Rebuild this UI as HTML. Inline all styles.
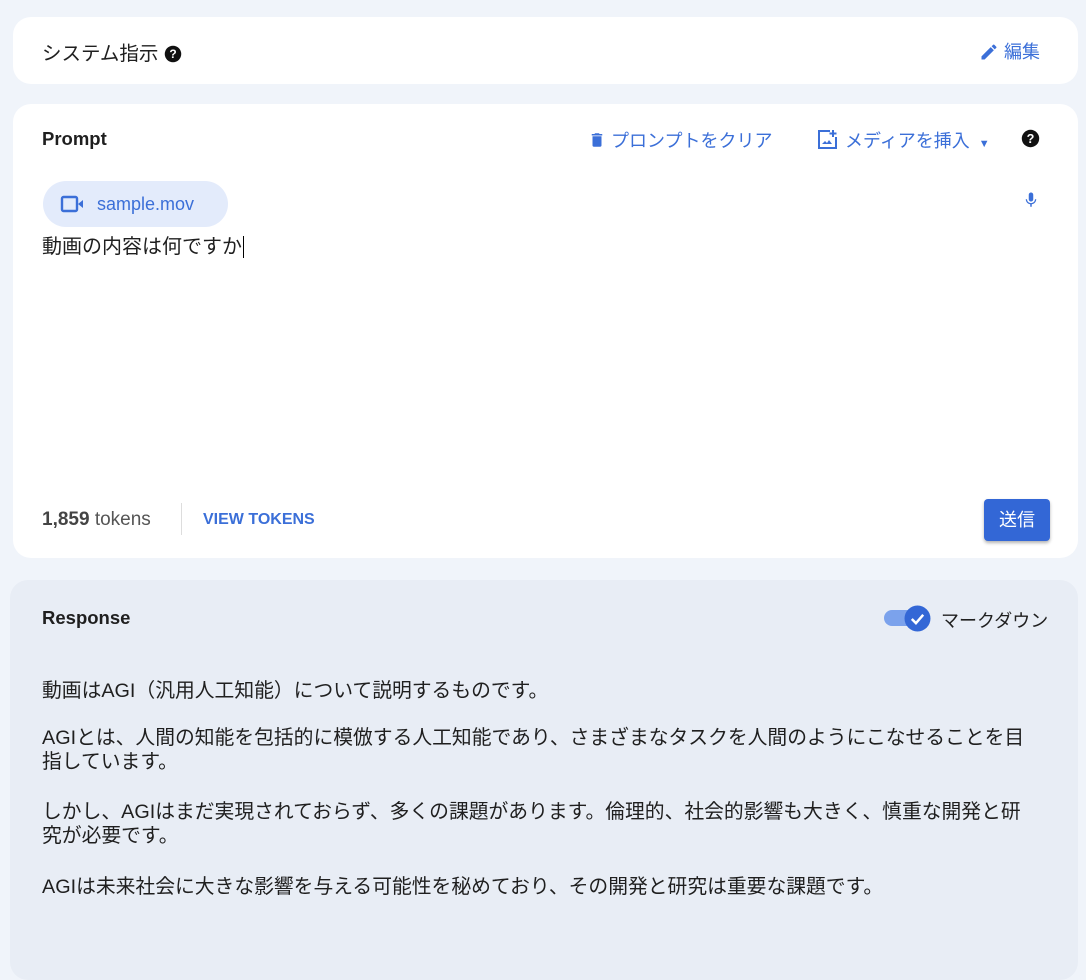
<!DOCTYPE html>
<html><head><meta charset="utf-8"><style>
*{box-sizing:border-box;margin:0;padding:0}
body{width:1086px;height:970px;background:#f0f4fa;font-family:"Liberation Sans","Noto Sans CJK JP",sans-serif;color:#1f1f1f;position:relative;overflow:hidden}
.card{position:absolute;background:#fff;border-radius:18px}
.abs{position:absolute;white-space:nowrap}
.blue{color:#3b6fd8}
</style></head><body>
<div class="card" style="left:13px;top:17px;width:1065px;height:67px"></div>
<div class="abs" style="left:42px;top:37px;font-size:19.5px">システム指示 <svg width="18" height="18" viewBox="0 0 24 24" style="vertical-align:-3px"><circle cx="12" cy="12" r="11" fill="#111"/><text x="12" y="17.5" font-size="16" font-weight="bold" fill="#fff" text-anchor="middle" font-family="Liberation Sans">?</text></svg></div>
<div class="abs blue" style="left:979px;top:38px;font-size:18px"><svg width="20" height="20" viewBox="0 0 24 24" style="vertical-align:-4px"><path d="M3 17.25V21h3.75L17.81 9.94l-3.75-3.75L3 17.25zM20.71 7.04a1 1 0 000-1.41l-2.34-2.34a1 1 0 00-1.41 0l-1.83 1.83 3.75 3.75 1.83-1.83z" fill="#3b6fd8"/></svg> 編集</div>

<div class="card" style="left:13px;top:104px;width:1065px;height:454px"></div>
<div class="abs" style="left:42px;top:128px;font-size:18.5px;font-weight:bold">Prompt</div>
<div class="abs blue" style="left:588px;top:127px;font-size:18px"><svg width="18" height="20" viewBox="0 0 24 24" style="vertical-align:-3px"><path d="M6 19a2 2 0 002 2h8a2 2 0 002-2V7H6v12zM19 4h-3.5l-1-1h-5l-1 1H5v2h14V4z" fill="#3b6fd8"/></svg> プロンプトをクリア</div>
<div class="abs blue" style="left:816px;top:127px;font-size:18px"><svg width="24" height="24" viewBox="0 0 24 24" style="vertical-align:-4px"><path d="M17 3v7M13.5 6.5h7" stroke="#3b6fd8" stroke-width="2"/><path d="M14 4H3v17h17V10" fill="none" stroke="#3b6fd8" stroke-width="2"/><path d="M6 17l3-3 2 2 2-3 3 4z" fill="#3b6fd8"/></svg> メディアを挿入 <span style="font-size:11px;margin-left:4px">▼</span></div>
<svg class="abs" style="left:1021px;top:129px" width="19" height="19" viewBox="0 0 24 24"><circle cx="12" cy="12" r="11" fill="#111"/><text x="12" y="17.5" font-size="16" font-weight="bold" fill="#fff" text-anchor="middle" font-family="Liberation Sans">?</text></svg>
<div class="abs" style="left:43px;top:181px;width:185px;height:46px;border-radius:23px;background:#e3ebfb"></div>
<svg class="abs" style="left:60px;top:194px" width="26" height="20" viewBox="0 0 26 20"><rect x="2" y="3" width="15" height="14" rx="1.5" fill="none" stroke="#3b6fd8" stroke-width="2.4"/><path d="M18 10l5-4v8z" fill="#3b6fd8"/></svg>
<div class="abs blue" style="left:97px;top:194px;font-size:18px">sample.mov</div>
<svg class="abs" style="left:1022px;top:189px" width="18" height="22" viewBox="0 0 24 24"><path d="M12 14a3 3 0 003-3V5a3 3 0 00-6 0v6a3 3 0 003 3zm5.3-3c0 3-2.5 5.1-5.3 5.1S6.7 14 6.7 11H5c0 3.4 2.7 6.2 6 6.7V21h2v-3.3c3.3-.5 6-3.3 6-6.7h-1.7z" fill="#3b6fd8"/></svg>
<div class="abs" style="left:42px;top:230px;font-size:20px">動画の内容は何ですか<span style="border-left:1.5px solid #000;margin-left:1px"></span></div>
<div class="abs" style="left:42px;top:509px;font-size:19px;color:#555"><b style="color:#444;font-weight:bold">1,859</b> tokens</div>
<div class="abs" style="left:181px;top:503px;width:1px;height:32px;background:#ddd"></div>
<div class="abs" style="left:203px;top:511px;font-size:16px;font-weight:bold;color:#3b6fd8">VIEW TOKENS</div>
<div class="abs" style="left:984px;top:499px;width:66px;height:42px;background:#3367d6;border-radius:4px;color:#fff;font-size:18px;text-align:center;line-height:42px;box-shadow:0 2px 3px rgba(0,0,0,.3)">送信</div>

<div class="abs" style="left:10px;top:580px;width:1068px;height:400px;background:#e8edf5;border-radius:18px"></div>
<div class="abs" style="left:42px;top:607px;font-size:18.5px;font-weight:bold">Response</div>
<div class="abs" style="left:884px;top:610px;width:36px;height:16px;border-radius:8px;background:#7ba2ec"></div>
<svg class="abs" style="left:904px;top:605px" width="27" height="27" viewBox="0 0 26 26"><circle cx="13" cy="13" r="12.5" fill="#3367d6"/><path d="M7.5 13.5l4 4 7-8" stroke="#fff" stroke-width="2.4" fill="none"/></svg>
<div class="abs" style="left:941px;top:607px;font-size:18px">マークダウン</div>
<div class="abs" style="left:42px;top:679px;width:1040px;font-size:19.8px;line-height:24px">
<p style="margin-bottom:23px">動画はAGI（汎用人工知能）について説明するものです。</p>
<p style="margin-bottom:26px">AGIとは、人間の知能を包括的に模倣する人工知能であり、さまざまなタスクを人間のようにこなせることを目<br>指しています。</p>
<p style="margin-bottom:27px">しかし、AGIはまだ実現されておらず、多くの課題があります。倫理的、社会的影響も大きく、慎重な開発と研<br>究が必要です。</p>
<p>AGIは未来社会に大きな影響を与える可能性を秘めており、その開発と研究は重要な課題です。</p>
</div>
</body></html>
